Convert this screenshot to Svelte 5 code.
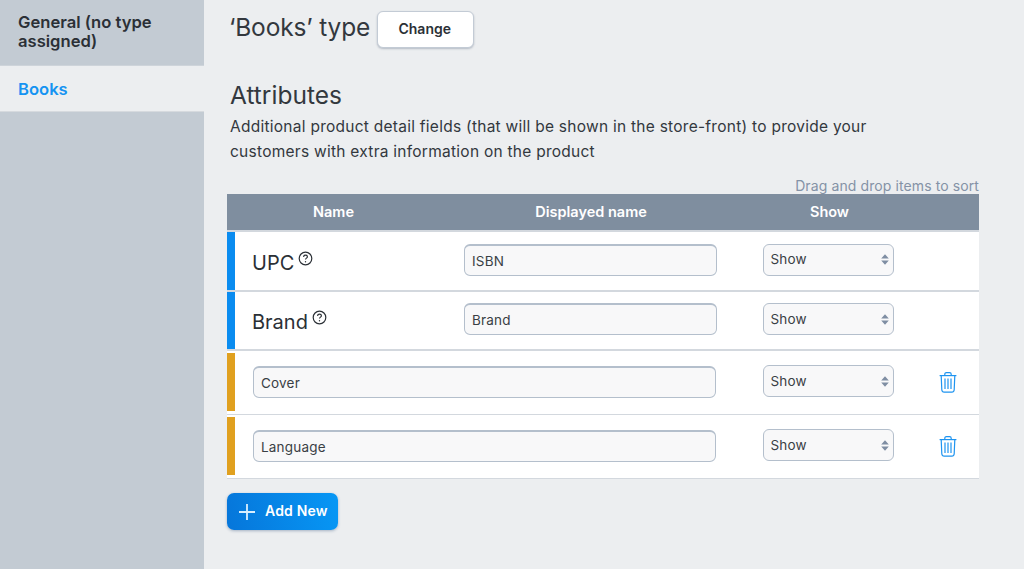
<script lang="ts">
  const fixedAttrs = [
    { name: 'UPC', value: 'ISBN' },
    { name: 'Brand', value: 'Brand' }
  ];
  const customAttrs = ['Cover', 'Language'];
</script>

{#snippet showSelect()}
  <div class="select">
    <span>Show</span>
    <svg width="8" height="11" viewBox="0 0 8 11"><path d="M4 0.3 7.8 4.5H0.2ZM4 10.7 0.2 6.5H7.8Z" fill="#7f8ea3" /></svg>
  </div>
{/snippet}

<div class="page">
  <aside class="sidebar">
    <div class="side-item">General (no type assigned)</div>
    <div class="side-item active">Books</div>
  </aside>

  <main class="main">
    <div class="title-row">
      <h1>‘Books’ type</h1>
      <button class="change">Change</button>
    </div>

    <h2>Attributes</h2>
    <p class="desc">Additional product detail fields (that will be shown in the store-front) to provide your customers with extra information on the product</p>
    <div class="hint">Drag and drop items to sort</div>

    <div class="table">
      <div class="head">
        <div class="h-name">Name</div>
        <div class="h-display">Displayed name</div>
        <div class="h-show">Show</div>
      </div>

      {#each fixedAttrs as attr}
        <div class="row fixed">
          <div class="bar blue"></div>
          <div class="attr-name">
            {attr.name}
            <svg class="help" width="15" height="15" viewBox="0 0 15 15" fill="none">
              <circle cx="7.5" cy="7.5" r="6.3" stroke="#2b3036" stroke-width="1.2" />
              <path d="M5.6 6c0-1.1.9-1.8 1.9-1.8s1.9.7 1.9 1.6c0 1.3-1.9 1.4-1.9 2.8" stroke="#2b3036" stroke-width="1.2" />
              <circle cx="7.5" cy="10.7" r=".7" fill="#2b3036" />
            </svg>
          </div>
          <div class="input display">{attr.value}</div>
          {@render showSelect()}
        </div>
      {/each}

      {#each customAttrs as attr}
        <div class="row custom">
          <div class="bar amber"></div>
          <div class="input wide">{attr}</div>
          {@render showSelect()}
          <svg class="trash" width="18" height="21" viewBox="0 0 18 21" fill="none" stroke="#1e94f0" stroke-width="1.2">
            <path d="M0.6 3.6H17.4" />
            <path d="M5.8 3.4V2.2C5.8 1.2 6.6.7 7.4.7h3.2c.8 0 1.6.5 1.6 1.5v1.2" />
            <path d="M2.2 3.6 2.8 17.8c.1 1.4 1 2.4 2.4 2.4h7.6c1.4 0 2.3-1 2.4-2.4L15.8 3.6" />
            <path d="M6 6.6V17M9 6.6V17M12 6.6V17" />
          </svg>
        </div>
      {/each}
    </div>

    <button class="add">
      <svg width="18" height="18" viewBox="0 0 18 18"><path d="M9 1V17M1 9H17" stroke="#d9eefe" stroke-width="1.8" /></svg>
      <span>Add New</span>
    </button>
  </main>
</div>

<style>
  :global(body) { margin: 0; background: #eceef0; }
  .page { display: flex; height: 569px; overflow: hidden; font-family: Inter, "Liberation Sans", sans-serif; color: #2f343a; }

  .sidebar { width: 204px; flex-shrink: 0; background: #c3cbd3; }
  .side-item { padding: 13px 18px; font-size: 16.6px; font-weight: 600; line-height: 19px; color: #2b3036; height: 39px; border-bottom: 1px solid #ced4da; }
  .side-item.active { background: #eceef0; color: #1593f2; height: 19px; padding: 14px 18px 12px; border-bottom: 1px solid #d6dade; }

  .main { width: 752px; padding-left: 23px; }
  .title-row { display: flex; align-items: center; gap: 7px; height: 36px; margin: 11px 0 0 2px; }
  h1 { margin: 0 0 4px; font-size: 24.5px; font-weight: 400; letter-spacing: -0.15px; line-height: 32px; color: #33383e; }
  .change { width: 97px; height: 37px; padding: 0 2px 2px 0; background: #fff; border: 1px solid #c3cbd5; border-radius: 6px; box-shadow: 0 1px 2px rgba(110, 125, 145, .45); font: 600 14px Inter, "Liberation Sans", sans-serif; color: #2b3036; }

  h2 { margin: 32px 0 0 3px; font-size: 24.5px; font-weight: 400; line-height: 32px; color: #33383e; }
  .desc { margin: 4px 0 0 3px; width: 650px; font-size: 15.5px; letter-spacing: .26px; line-height: 24.5px; color: #33383e; }
  .hint { margin-top: 14px; text-align: right; font-size: 14px; line-height: 16px; height: 16px; color: #8492a6; letter-spacing: .1px; }

  .table { width: 752px; }
  .head { height: 36px; background: #7f8e9f; border-bottom: 2px solid #d3d8de; display: flex; align-items: center; color: #fff; font-size: 14.5px; font-weight: 600; text-align: center; }
  .head div { margin-bottom: 1px; }
  .h-name { width: 213px; }
  .h-display { width: 302px; }
  .h-show { width: 175px; }

  .row { box-sizing: border-box; display: flex; align-items: center; background: #fff; border-bottom: 1px solid #d3d8de; }
  .row.fixed { height: 59.5px; border-bottom-width: 2px; }
  .row.custom { height: 64px; }
  .bar { width: 8px; align-self: stretch; flex-shrink: 0; }
  .row.custom .bar { margin: 2px 0 3px; }
  .blue { background: #0a8cf0; }
  .amber { background: #e0a01f; }

  .attr-name { width: 229px; padding-left: 17px; box-sizing: border-box; font-size: 20px; color: #2b3036; display: flex; align-items: flex-start; gap: 4px; position: relative; top: 2px; }

  .input { box-sizing: border-box; height: 32px; display: flex; align-items: center; padding: 1px 7px 0; background: #f8f8f9; border: 1.5px solid #b4bfcc; border-top-width: 2px; border-radius: 6px; font-size: 13.5px; letter-spacing: .2px; color: #3a3f45; }
  .fixed .input, .fixed .select { margin-bottom: 2px; }
  .display { width: 253px; }
  .wide { width: 463px; margin-left: 18px; margin-bottom: 1px; }

  .select { box-sizing: border-box; width: 131px; height: 32px; margin-left: 46px; padding: 0 4.5px 0 6.5px; display: flex; align-items: center; justify-content: space-between; background: #f8f8f9; border: 1.5px solid #b4bfcc; border-radius: 6px; font-size: 13.5px; letter-spacing: .2px; color: #3a3f45; }
  .wide + .select { margin-left: 47px; margin-bottom: 3px; }
  .select span { position: relative; top: -0.5px; }
  .trash { margin-left: 44.5px; margin-bottom: 1px; }

  .add { display: flex; align-items: center; gap: 9px; margin-top: 14px; width: 111px; height: 37px; padding: 0 0 0 11px; border: 0; border-radius: 7px; background: linear-gradient(80deg, #0676da, #0797f5); box-shadow: 0 1px 3px rgba(60, 90, 130, .4); color: #fff; font: 600 14px Inter, "Liberation Sans", sans-serif; letter-spacing: .2px; }
  .add span { margin-bottom: 2px; }
</style>
